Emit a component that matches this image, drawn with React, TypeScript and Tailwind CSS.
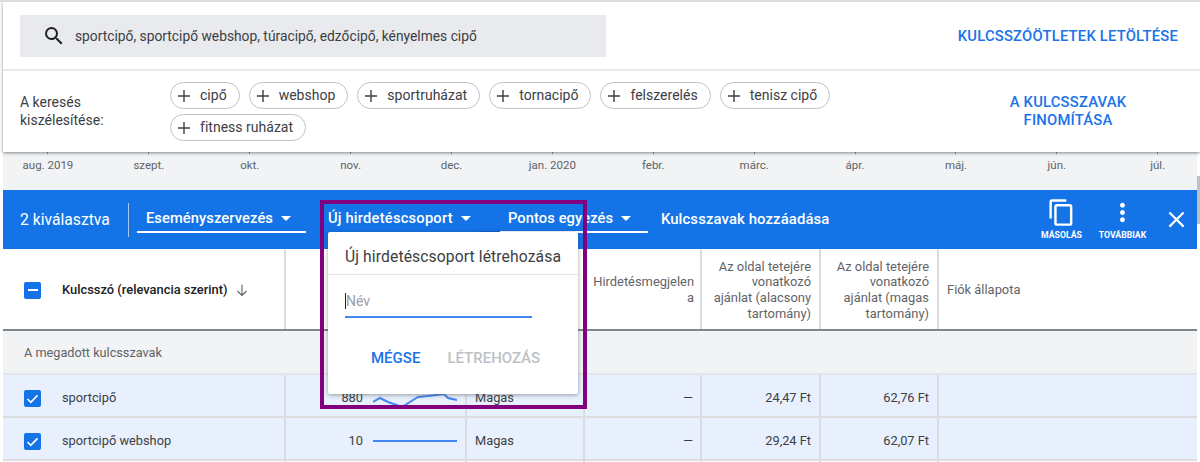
import React from 'react';

const months = ['aug. 2019', 'szept.', 'okt.', 'nov.', 'dec.', 'jan. 2020', 'febr.', 'márc.', 'ápr.', 'máj.', 'jún.', 'júl.'];
const chips = ['cipő', 'webshop', 'sportruházat', 'tornacipő', 'felszerelés', 'tenisz cipő', 'fitness ruházat'];

const gridCols = 'grid grid-cols-[283px_181px_118px_117px_119px_118px_1fr]';
const cellBorder = 'border-r-2 border-[#dadce0]';

const Plus = () => (
  <svg width="14" height="14" viewBox="0 0 14 14" className="shrink-0 text-[#3c4043]">
    <path d="M7 1v12M1 7h12" stroke="currentColor" strokeWidth="1.4" />
  </svg>
);

const Chip = ({ label }: { label: string }) => (
  <div className="flex h-[27px] items-center gap-[9px] rounded-full border border-[#bdc1c6] bg-white pl-[6px] pr-[12px] text-[14px] tracking-[0.015px] text-[#3c4043]">
    <Plus />
    <span>{label}</span>
  </div>
);

const Caret = () => <span className="ml-2 inline-block border-x-[5.5px] border-t-[5.5px] border-x-transparent border-t-white" />;

const Dropdown = ({ label, className }: { label: string; className: string }) => (
  <div className={`flex h-[26px] items-center border-b-2 text-[14.7px] font-medium text-white ${className}`}>
    {label}
    <Caret />
  </div>
);

const Checkbox = () => (
  <div className="flex h-[17px] w-[17px] shrink-0 items-center justify-center rounded-[2px] bg-[#1473e6]">
    <svg width="13" height="13" viewBox="0 0 13 13">
      <path d="M1.5 7l3.3 3.3 6.7-7" fill="none" stroke="white" strokeWidth="1.7" />
    </svg>
  </div>
);

const Sparkline = ({ points }: { points: string }) => (
  <svg width="84" height="42" viewBox="0 0 84 42" className="shrink-0">
    <polyline points={points} fill="none" stroke="#4285f4" strokeWidth="2" />
  </svg>
);

const Row = ({ name, volume, spark, low, high }: { name: string; volume: string; spark: string; low: string; high: string }) => (
  <div className={`${gridCols} h-[43px] border-b-2 border-[#dadce0] bg-[#e8f0fe] text-[12.8px] text-[#3c4043]`}>
    <div className={`flex items-center gap-[21px] pl-[21px] pt-[2px] ${cellBorder}`}>
      <Checkbox />
      <span>{name}</span>
    </div>
    <div className={`flex items-center justify-end gap-[10px] pr-[8px] pt-[2px] ${cellBorder}`}>
      <span>{volume}</span>
      <Sparkline points={spark} />
    </div>
    <div className={`flex items-center pl-[8px] pt-[2px] ${cellBorder}`}>Magas</div>
    <div className={`flex items-center justify-end pr-[7px] pt-[2px] ${cellBorder}`}>—</div>
    <div className={`flex items-center justify-end pr-[8px] pt-[2px] ${cellBorder}`}>{low}</div>
    <div className={`flex items-center justify-end pr-[8px] pt-[2px] ${cellBorder}`}>{high}</div>
    <div />
  </div>
);

export default function App() {
  return (
    <div className="relative h-[462px] w-[1200px] overflow-hidden border-t-2 border-[#dadce0] bg-white pl-[3px] font-['Roboto',sans-serif]">
      {/* Search panel */}
      <div className="relative z-10 h-[150px] bg-white shadow-[0_1px_3px_rgba(60,64,67,0.6)]">
        <div className="flex h-[69px] items-start justify-between border-b-2 border-[#e8eaed] pl-[17px] pr-[22px] pt-[13px]">
          <div className="flex h-[42px] w-[586px] items-center bg-[#e8eaed] pl-[22px]">
            <svg width="24" height="24" viewBox="0 0 24 24" fill="#202124" className="mr-[9px] shrink-0">
              <path d="M15.5 14h-.79l-.28-.27A6.47 6.47 0 0 0 16 9.5 6.5 6.5 0 1 0 9.5 16c1.61 0 3.09-.59 4.23-1.57l.27.28v.79l5 4.99L20.49 19l-4.99-5zm-6 0C7.01 14 5 11.99 5 9.5S7.01 5 9.5 5 14 7.01 14 9.5 11.99 14 9.5 14z" />
            </svg>
            <span className="text-[13.8px] text-[#3c4043]">sportcipő, sportcipő webshop, túracipő, edzőcipő, kényelmes cipő</span>
          </div>
          <span className="mt-[10px] text-[14.8px] font-medium tracking-[0.2px] text-[#1a73e8]">KULCSSZÓÖTLETEK LETÖLTÉSE</span>
        </div>
        <div className="flex h-[79px] items-start pl-[17px]">
          <div className="mt-[22px] w-[150px] text-[14px] leading-[18px] text-[#3c4043]">
            A keresés
            <br />
            kiszélesítése:
          </div>
          <div className="mt-[11px] flex w-[680px] flex-wrap gap-x-[9px] gap-y-[5px]">
            {chips.map((c) => (
              <Chip key={c} label={c} />
            ))}
          </div>
          <div className="mt-[22px] ml-[133px] w-[170px] text-center text-[14.8px] font-medium leading-[18px] tracking-[0.2px] text-[#1a73e8]">
            A KULCSSZAVAK
            <br />
            FINOMÍTÁSA
          </div>
        </div>
      </div>

      <div className="w-[1194px]">
        {/* Chart axis */}
        <div className="flex h-[38px] items-start bg-[#f1f3f4] text-[11.5px] text-[#5f6368]">
          <div className="-ml-[5.5px] flex">
            {months.map((m) => (
              <div key={m} className="flex w-[100.9px] shrink-0 flex-col items-center">
                <div className="mb-[3px] h-[2px] w-px bg-[#80868b]" />
                {m}
              </div>
            ))}
          </div>
        </div>

        {/* Selection toolbar */}
        <div className="flex h-[59px] items-center bg-[#1473e6] text-white">
          <span className="ml-[17px] text-[15.7px]">2 kiválasztva</span>
          <div className="ml-[18px] h-[34px] w-px bg-[#a9c9f5]" />
          <Dropdown label="Eseményszervezés" className="ml-[8px] w-[169px] border-white pl-[9px] tracking-[0.1px]" />
          <Dropdown label="Új hirdetéscsoport" className="ml-[22px] w-[151px] border-transparent tracking-[0.22px]" />
          <div className="h-[26px] w-[21px] border-b-2 border-[#0d5fd0]" />
          <Dropdown label="Pontos egyezés" className="w-[148px] border-white pl-[8px] tracking-[0.1px]" />
          <span className="ml-[13px] text-[14.9px] font-medium tracking-[0.1px]">Kulcsszavak hozzáadása</span>
          <div className="ml-auto flex items-center">
            <div className="flex w-[41px] flex-col items-center">
              <svg width="29" height="29" viewBox="0 0 24 24" fill="white">
                <path d="M16 1H4c-1.1 0-2 .9-2 2v14h2V3h12V1zm3 4H8c-1.1 0-2 .9-2 2v14c0 1.1.9 2 2 2h11c1.1 0 2-.9 2-2V7c0-1.1-.9-2-2-2zm0 16H8V7h11v14z" />
              </svg>
              <span className="mt-[2px] text-[8.7px] font-bold leading-[12px]">MÁSOLÁS</span>
            </div>
            <div className="ml-[17px] flex w-[47px] flex-col items-center">
              <svg width="29" height="29" viewBox="0 0 24 24" fill="white">
                <path d="M12 8c1.1 0 2-.9 2-2s-.9-2-2-2-2 .9-2 2 .9 2 2 2zm0 2c-1.1 0-2 .9-2 2s.9 2 2 2 2-.9 2-2-.9-2-2-2zm0 6c-1.1 0-2 .9-2 2s.9 2 2 2 2-.9 2-2-.9-2-2-2z" />
              </svg>
              <span className="mt-[2px] text-[8.7px] font-bold leading-[12px]">TOVÁBBIAK</span>
            </div>
            <svg width="27" height="27" viewBox="0 0 24 24" fill="white" className="ml-[16.5px] mr-[7.5px]">
              <path d="M19 6.41 17.59 5 12 10.59 6.41 5 5 6.41 10.59 12 5 17.59 6.41 19 12 13.41 17.59 19 19 17.59 13.41 12z" />
            </svg>
          </div>
        </div>

        {/* Table header */}
        <div className={`${gridCols} h-[82px] border-b-2 border-[#80868b] bg-white text-[12.9px] leading-[15.7px] text-[#5f6368]`}>
          <div className={`flex items-center gap-[21px] pl-[21px] pt-[2px] ${cellBorder}`}>
            <div className="flex h-[17px] w-[17px] shrink-0 items-center justify-center rounded-[2px] bg-[#1473e6]">
              <div className="h-[2px] w-[10px] bg-white" />
            </div>
            <span className="font-medium text-[#202124]">Kulcsszó (relevancia szerint)</span>
            <svg width="14" height="14" viewBox="0 0 14 14" className="-ml-[14px]">
              <path d="M7 1.5v11M2.5 8l4.5 4.5L11.5 8" fill="none" stroke="#5f6368" strokeWidth="1.1" />
            </svg>
          </div>
          <div className={cellBorder} />
          <div className={cellBorder} />
          <div className={`flex items-center justify-end pr-[6px] pt-[2px] text-right ${cellBorder}`}>
            <span>
              Hirdetésmegjelen
              <br />a
            </span>
          </div>
          <div className={`flex items-center justify-end pr-[8px] pt-[2px] text-right ${cellBorder}`}>
            <span>
              Az oldal tetejére
              <br />
              vonatkozó
              <br />
              ajánlat (alacsony
              <br />
              tartomány)
            </span>
          </div>
          <div className={`flex items-center justify-end pr-[8px] pt-[2px] text-right ${cellBorder}`}>
            <span>
              Az oldal tetejére
              <br />
              vonatkozó
              <br />
              ajánlat (magas
              <br />
              tartomány)
            </span>
          </div>
          <div className="flex items-center pl-[8px] pt-[2px]">Fiók állapota</div>
        </div>

        {/* Group row */}
        <div className="flex h-[44px] items-center border-b-2 border-[#e3e5e8] bg-[#f1f3f4] pl-[21px] pt-[1px] text-[12.7px] text-[#5f6368]">A megadott kulcsszavak</div>

        <Row name="sportcipő" volume="880" spark="0,25 7,21 15,25 29,30 45,20 55,19 71,17 75,21 84,23" low="24,47 Ft" high="62,76 Ft" />
        <Row name="sportcipő webshop" volume="10" spark="0,21 84,21" low="29,24 Ft" high="62,07 Ft" />
      </div>

      {/* Scrollbar thumb */}
      <div className="absolute right-0 top-[174px] h-[48px] w-[3px] bg-[#bdc1c6]" />

      {/* Popup */}
      <div className="absolute left-[328px] top-[230px] z-20 h-[162px] w-[250px] rounded-[2px] bg-white shadow-[0_1px_4px_rgba(60,64,67,0.5)]">
        <div className="flex h-[43px] items-center border-b border-[#e3e5e8] pl-[17px] pt-[8px] text-[15.7px] tracking-[0.1px] text-[#3c4043]">Új hirdetéscsoport létrehozása</div>
        <div className="mx-[17px] mt-[16px] flex h-[27px] w-[187px] items-start border-b-2 border-[#4285f4] text-[14px] text-[#9aa0a6]">
          <span className="mt-[2px] h-[16px] w-px bg-[#202124]" />
          <span>Név</span>
        </div>
        <div className="mt-[29px] flex gap-[27px] pl-[43px] text-[15px] font-medium">
          <span className="text-[#1a73e8]">MÉGSE</span>
          <span className="text-[#bdc1c6]">LÉTREHOZÁS</span>
        </div>
      </div>

      {/* Highlight frame */}
      <div className="pointer-events-none absolute left-[320px] top-[198px] z-30 h-[209px] w-[267px] border-4 border-[#800080]" />
    </div>
  );
}
